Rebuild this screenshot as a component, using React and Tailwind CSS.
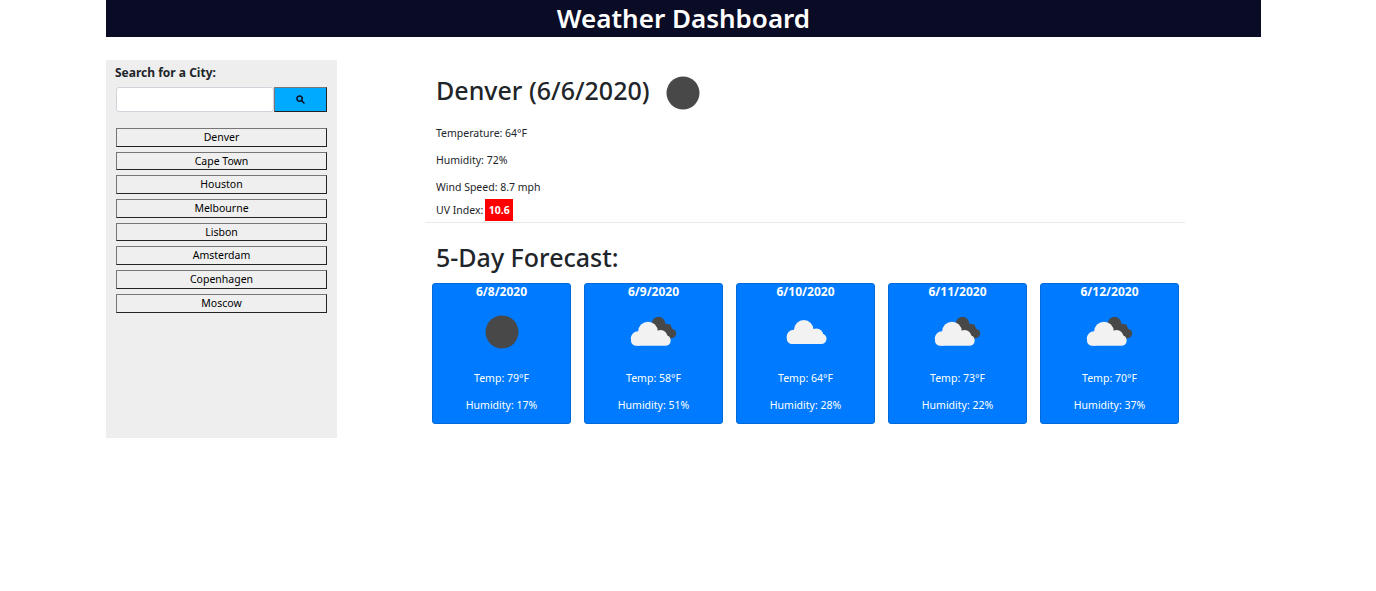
import React from "react";

const cities = ["Denver", "Cape Town", "Houston", "Melbourne", "Lisbon", "Amsterdam", "Copenhagen", "Moscow"];

const forecast = [
  { date: "6/8/2020", icon: "sun", temp: 79, humidity: 17 },
  { date: "6/9/2020", icon: "clouds", temp: 58, humidity: 51 },
  { date: "6/10/2020", icon: "cloud", temp: 64, humidity: 28 },
  { date: "6/11/2020", icon: "clouds", temp: 73, humidity: 22 },
  { date: "6/12/2020", icon: "clouds", temp: 70, humidity: 37 },
];

function CloudShape({ dx = 0, dy = 0 }) {
  return (
    <g fill="#f2f2f2" transform={`translate(${dx} ${dy})`}>
      <circle cx="19" cy="24.5" r="9.8" />
      <circle cx="31.5" cy="30" r="7" />
      <circle cx="9" cy="31.5" r="7.2" />
      <rect x="2" y="28" width="39.7" height="10.7" rx="5.3" />
    </g>
  );
}

// same idea as the openweather icons, 50px box
function WeatherIcon({ type, big }) {
  const size = "w-[50px] h-[50px]";
  if (type === "sun") {
    return (
      <svg viewBox="0 0 50 50" className={size}>
        <circle cx="25" cy="25" r="16.5" fill="#484848" />
      </svg>
    );
  }
  if (type === "cloud") {
    return (
      <svg viewBox="0 0 50 50" className={size}>
        <CloudShape dx={3.8} dy={-1.6} />
      </svg>
    );
  }
  return (
    <svg viewBox="0 0 50 50" className={size}>
      <g fill="#484848">
        <circle cx="29.5" cy="16.5" r="6.7" />
        <circle cx="38" cy="21.5" r="4.8" />
        <circle cx="42.5" cy="26.5" r="4.7" />
        <rect x="28" y="20" width="14" height="12" />
      </g>
      <CloudShape />
    </svg>
  );
}

function App() {
  return (
    <div className="min-h-[591px] w-full bg-white font-['Noto_Sans',sans-serif] text-[#212529]">
      <div className="mx-[106px] w-[1155px]">
        <header className="h-[37px] bg-[#0a0b25] text-center text-[26px] font-semibold leading-[36px] text-white">
          Weather Dashboard
        </header>

        <div className="mt-[23px] flex items-start">
          <aside className="h-[378px] w-[231px] bg-[#eeeeee] px-[10px] pt-[5px]">
            <label htmlFor="city" className="-ml-[1px] block text-[12px] font-bold leading-[16px]">
              Search for a City:
            </label>
            <div className="mt-[6px] flex">
              <input
                id="city"
                type="text"
                className="h-[25px] w-[158px] rounded-[3px] border border-[#ced4da] bg-white"
              />
              <button className="flex h-[25px] w-[53px] items-center justify-center border border-t-[#767676] border-l-[#767676] border-r-[#222222] border-b-[#222222] bg-[#00aaff]">
                <svg viewBox="0 0 10 10" className="h-[9px] w-[9px]" fill="none" stroke="#0a0b25" strokeWidth="1.7">
                  <circle cx="4" cy="4" r="3" />
                  <path d="M6.2 6.2 9.4 9.4" />
                </svg>
              </button>
            </div>
            <div className="mt-[16px] flex flex-col gap-[5px]">
              {cities.map((city) => (
                <button
                  key={city}
                  className="h-[18.7px] w-[211px] border border-t-[#767676] border-l-[#767676] border-r-[#222222] border-b-[#222222] bg-[#efefef] text-center text-[10.5px] leading-[17px] text-black"
                >
                  {city}
                </button>
              ))}
            </div>
          </aside>

          <main className="ml-[88px] w-[760px]">
            <div className="border-b border-[#e9e9e9] pb-px">
              <div className="flex h-[60px] items-center pl-[11px]">
                <h2 className="text-[25px] font-medium leading-[48px]">Denver (6/6/2020)</h2>
                <div className="ml-[8px] mt-[6px]">
                  <WeatherIcon type="sun" />
                </div>
              </div>
              <div className="pl-[11px] text-[10.5px] leading-[16px]">
                <p className="mt-[5px]">Temperature: 64°F</p>
                <p className="mt-[11px]">Humidity: 72%</p>
                <p className="mt-[11px]">Wind Speed: 8.7 mph</p>
                <p className="mt-[4px] flex items-center">
                  UV Index:
                  <span className="ml-[2px] flex h-[22px] w-[28px] items-center justify-center bg-[#ff0000] font-bold text-white">
                    10.6
                  </span>
                </p>
              </div>
            </div>

            <h2 className="pl-[11px] pt-[10px] text-[25px] font-medium leading-[48px]">5-Day Forecast:</h2>

            <div className="ml-[7px] mt-[2px] flex gap-[13px]">
              {forecast.map((day) => (
                <div
                  key={day.date}
                  className="flex h-[141px] w-[139px] flex-col items-center rounded-[3px] border border-[#0069d9] bg-[#007bff] text-white"
                >
                  <div className="text-[12px] font-bold leading-[16px]">{day.date}</div>
                  <div className="mt-[7px]">
                    <WeatherIcon type={day.icon} />
                  </div>
                  <p className="mt-[13px] text-[10.5px] leading-[16px]">Temp: {day.temp}°F</p>
                  <p className="mt-[11px] text-[10.5px] leading-[16px]">Humidity: {day.humidity}%</p>
                </div>
              ))}
            </div>
          </main>
        </div>
      </div>
    </div>
  );
}

export default App;
